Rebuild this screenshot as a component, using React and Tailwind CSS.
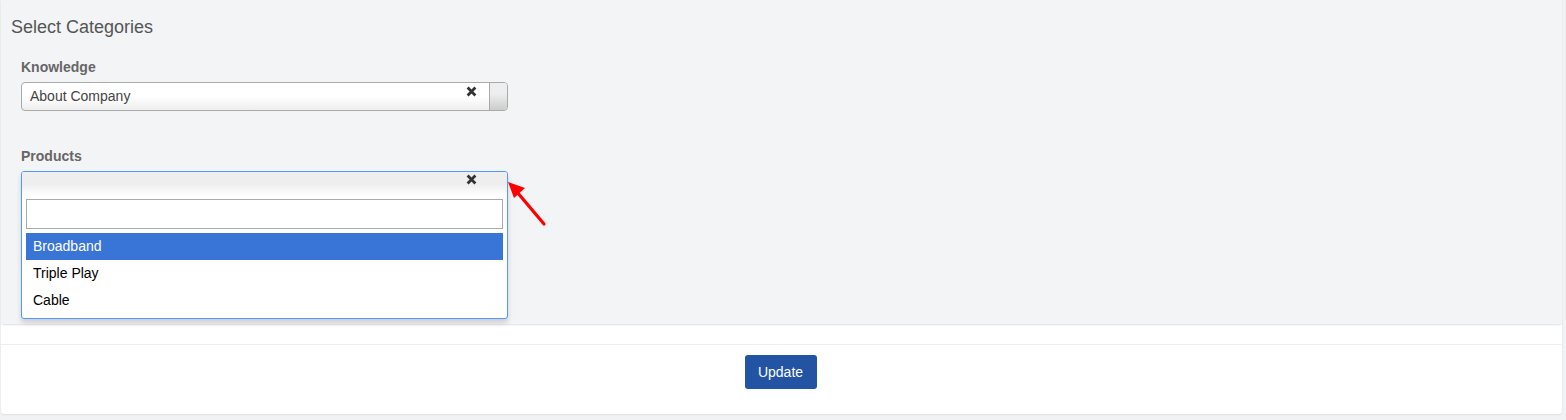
import React from "react";

function XIcon() {
  return (
    <svg width="11" height="11" viewBox="0 0 11 11" className="block">
      <path d="M1.6 1.6 L9.4 9.4 M9.4 1.6 L1.6 9.4" stroke="#333" strokeWidth="2.8" strokeLinecap="butt" />
    </svg>
  );
}

export default function App() {
  return (
    <div className="w-full h-[420px] bg-[#f1f2f4] font-['Liberation_Sans',Arial,sans-serif] overflow-hidden">
      <div className="ml-[1px] w-[1561px] h-[414px] bg-white rounded-b-[3px] shadow-[0_1px_2px_rgba(0,0,0,0.08)] flex flex-col">
        {/* top gray panel */}
        <div className="relative h-[325px] bg-[#f3f4f6] border-b border-[#e6e7e9] shadow-[0_1px_2px_rgba(0,0,0,0.04)] rounded-b-[3px]">
          <div className="pt-[17px] pl-[10px] text-[18px] leading-[20px] text-[#555]">Select Categories</div>
          <div className="pl-[20px] pt-[20px]">
            <div className="text-[14px] leading-[20px] font-bold text-[#666]">Knowledge</div>
            <div className="mt-[5px] w-[487px] h-[29px] flex rounded-[4px] border border-[#aaa] bg-[linear-gradient(to_top,#eee_0%,#fff_50%)] overflow-hidden">
              <div className="flex-1 pl-[8px] text-[14px] leading-[27px] text-[#444]">About Company</div>
              <div className="w-[11px] pt-[3px] mr-[12px]">
                <XIcon />
              </div>
              <div className="w-[18px] border-l border-[#aaa] bg-[linear-gradient(to_top,#ccc_0%,#eee_60%)]"></div>
            </div>

            <div className="mt-[35px] text-[14px] leading-[20px] font-bold text-[#666]">Products</div>
            <div className="mt-[5px] w-[487px] h-[148px] rounded-[3px] border border-[#5897fb] bg-white shadow-[0_4px_5px_rgba(0,0,0,0.15)] flex flex-col overflow-hidden">
              <div className="h-[24px] flex bg-[linear-gradient(to_top,#fff_0%,#eee_50%)]">
                <div className="flex-1"></div>
                <div className="w-[11px] pt-[2px] mr-[30px]">
                  <XIcon />
                </div>
              </div>
              <div className="px-[4px] pt-[3px]">
                <div className="h-[30px] border border-[#aaa] bg-white"></div>
              </div>
              <div className="px-[4px] pt-[4px]">
                <div className="h-[27px] bg-[#3875d7] text-white text-[14px] leading-[27px] pl-[7px]">Broadband</div>
                <div className="h-[27px] text-black text-[14px] leading-[27px] pl-[7px]">Triple Play</div>
                <div className="h-[27px] text-black text-[14px] leading-[27px] pl-[7px]">Cable</div>
              </div>
            </div>
          </div>

          {/* red arrow annotation */}
          <svg className="absolute left-[500px] top-[174px]" width="50" height="56" viewBox="0 0 50 56">
            <line x1="43" y1="50" x2="16" y2="18" stroke="#f00" strokeWidth="3.2" strokeLinecap="round" />
            <polygon points="7,8 24,14 13,24" fill="#f00" />
          </svg>
        </div>
        <div className="h-[20px] border-b border-[#eeeff1]"></div>
        <div className="flex-1 flex justify-center pt-[10px] pr-[2px]">
          <button className="w-[72px] h-[34px] rounded-[3px] bg-[#2254a3] text-white text-[14px] leading-[34px]">Update</button>
        </div>
      </div>
    </div>
  );
}
